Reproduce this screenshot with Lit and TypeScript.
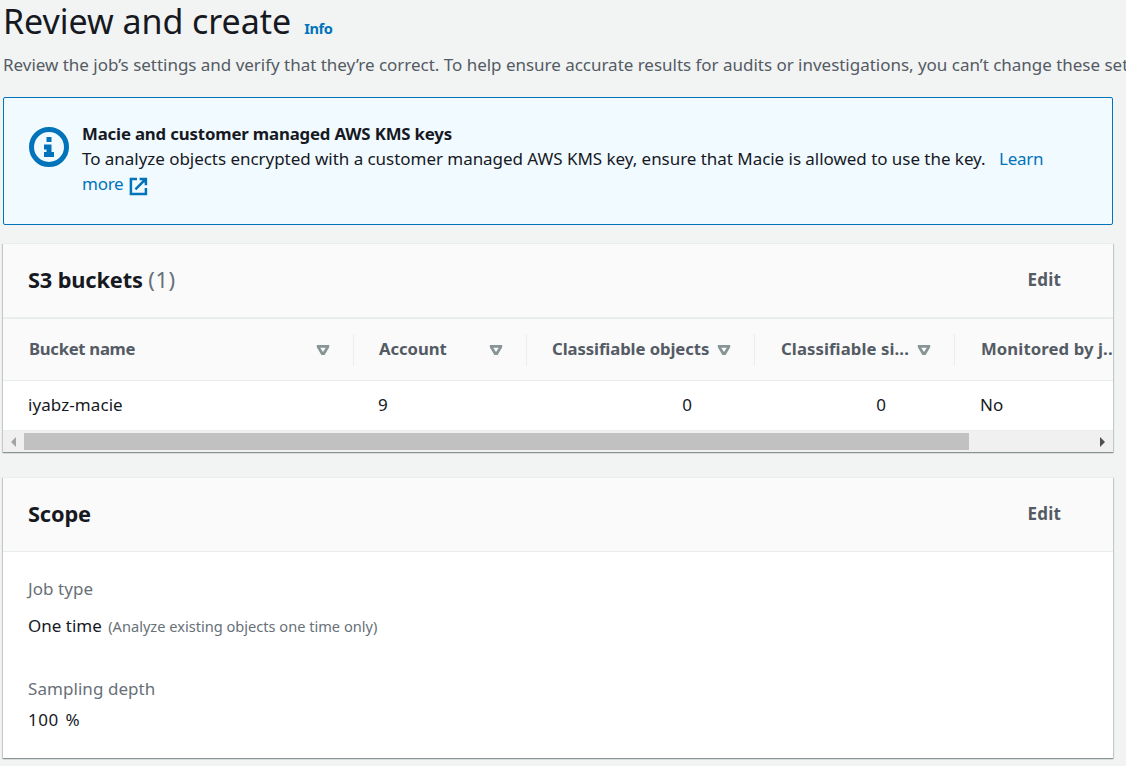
import { LitElement, html, css } from "lit";
import { customElement, property } from "lit/decorators.js";

const caret = html`<svg width="14" height="12" viewBox="0 0 14 12" aria-hidden="true">
  <path
    d="M0.8 1H13.2V3.2L8.6 11H5.4L0.8 3.2ZM4.2 3.7L7 8.1L9.8 3.7Z"
    fill="#879596"
    fill-rule="evenodd"
  />
</svg>`;

@customElement("console-card")
export class ConsoleCard extends LitElement {
  @property() heading = "";
  @property() counter = "";

  static styles = css`
    :host {
      display: block;
      background: #fff;
      box-shadow: 0 1px 0 0 #879596, 0 1px 1px 0 rgba(0, 28, 36, 0.3), 1px 1px 1px 0 rgba(0, 28, 36, 0.15),
        -1px 1px 1px 0 rgba(0, 28, 36, 0.15);
      border-top: 1px solid #eaeded;
      box-sizing: border-box;
    }
    .header {
      display: flex;
      justify-content: space-between;
      align-items: center;
      height: 74px;
      box-sizing: border-box;
      padding: 0 52px 2px 25px;
      background: #fafafa;
      border-bottom: 1px solid #eaeded;
    }
    .heading {
      margin: 0;
      font-size: 21.8px;
      line-height: 30px;
      font-weight: 700;
      color: #16191f;
      letter-spacing: -0.15px;
    }
    .counter {
      font-size: 22px;
      font-weight: 400;
      color: #687078;
      letter-spacing: 0.5px;
    }
    .edit {
      border: 0;
      padding: 0;
      background: none;
      font: inherit;
      font-weight: 700;
      line-height: 25px;
      letter-spacing: 0.2px;
      color: #545b64;
    }
  `;

  render() {
    return html`
      <div class="header">
        <h2 class="heading">
          ${this.heading}${this.counter ? html` <span class="counter">${this.counter}</span>` : ""}
        </h2>
        <button class="edit">Edit</button>
      </div>
      <slot></slot>
    `;
  }
}

@customElement("app-root")
export class AppRoot extends LitElement {
  static styles = css`
    :host {
      display: block;
      width: 1126px;
      height: 766px;
      overflow: hidden;
      box-sizing: border-box;
      padding-left: 3px;
      background: #f2f3f3;
      font-family: "Noto Sans", "Open Sans", sans-serif;
      font-size: 17px;
      line-height: 25px;
      color: #16191f;
    }
    .title-row {
      display: flex;
      align-items: baseline;
      gap: 13px;
      height: 52px;
    }
    .title {
      margin: 0;
      font-size: 34px;
      font-weight: 400;
      line-height: 42px;
      letter-spacing: -0.05px;
      white-space: nowrap;
    }
    .info {
      font-size: 14.6px;
      font-weight: 700;
      letter-spacing: -0.4px;
      color: #0073bb;
    }
    .description {
      height: 45px;
      margin: 0;
      white-space: nowrap;
      color: #545b64;
      letter-spacing: -0.022px;
    }
    .alert {
      display: flex;
      gap: 13px;
      width: 1110px;
      height: 128px;
      box-sizing: border-box;
      padding: 23px 60px 0 25px;
      border: 1px solid #0073bb;
      border-radius: 2px;
      background: #f1faff;
    }
    .alert-icon {
      flex: none;
      margin-top: 6px;
    }
    .alert-title {
      font-size: 16.8px;
      font-weight: 700;
      letter-spacing: -0.16px;
    }
    .alert-text {
      letter-spacing: -0.04px;
    }
    .link {
      color: #0073bb;
      letter-spacing: -0.25px;
    }
    .gap {
      padding-left: 9px;
    }
    .external {
      vertical-align: -6px;
      margin-left: 1px;
    }
    console-card {
      width: 1110px;
    }
    .buckets {
      height: 209px;
      margin-top: 18px;
    }
    .scope {
      height: 281px;
      margin-top: 25px;
    }
    .table {
      overflow: hidden;
    }
    .row {
      display: grid;
      grid-template-columns: 351px 173px 228px 200px 260px;
      width: 1212px;
      align-items: center;
    }
    .head {
      height: 63px;
      box-sizing: border-box;
      background: #fafafa;
      border-top: 1px solid #eaeded;
      border-bottom: 1px solid #eaeded;
      font-size: 16.7px;
      font-weight: 700;
      letter-spacing: -0.08px;
      color: #545b64;
    }
    .th {
      display: flex;
      align-items: center;
      justify-content: space-between;
      height: 32px;
      box-sizing: border-box;
      padding: 0 23px 0 25px;
      border-right: 1px solid #eaeded;
      white-space: nowrap;
    }
    .th svg {
      margin-top: 1px;
    }
    .th span {
      padding-bottom: 2px;
    }
    .th:first-child {
      letter-spacing: -0.3px;
      padding-left: 26px;
    }
    .th:nth-child(n + 4) {
      padding-left: 26px;
      letter-spacing: 0.1px;
    }
    .body {
      height: 49px;
      padding-bottom: 3px;
      box-sizing: border-box;
    }
    .td {
      padding-left: 25px;
      letter-spacing: 0.08px;
    }
    .account {
      padding-left: 24px;
    }
    .objects {
      padding-right: 63px;
      text-align: right;
    }
    .size {
      padding-right: 69px;
      text-align: right;
    }
    .scrollbar {
      display: flex;
      align-items: center;
      height: 22px;
      box-sizing: border-box;
      padding: 0 8px;
      background: #f0f0f0;
      border-top: 1px solid #eaeded;
    }
    .thumb {
      width: 945px;
      height: 17px;
      margin: 0 auto 0 8px;
      background: #c1c1c1;
    }
    .details {
      padding: 24px 25px;
    }
    .label {
      color: #687078;
      letter-spacing: 0.06px;
    }
    .value {
      margin-top: 12px;
    }
    .value.tight {
      margin-top: 6px;
      letter-spacing: 0.5px;
      word-spacing: 2px;
    }
    .field + .field {
      margin-top: 37px;
    }
    .note {
      font-size: 14.6px;
      color: #687078;
      margin-left: 2px;
    }
  `;

  private headers = ["Bucket name", "Account", "Classifiable objects", "Classifiable si..."];

  render() {
    return html`
      <div class="title-row">
        <h1 class="title">Review and create</h1>
        <a class="info">Info</a>
      </div>
      <p class="description">
        Review the job’s settings and verify that they’re correct. To help ensure accurate results for audits or
        investigations, you can’t change these settings
      </p>
      <div class="alert">
        <svg class="alert-icon" width="40" height="40" viewBox="0 0 40 40">
          <circle cx="20" cy="20" r="17.5" fill="none" stroke="#0073bb" stroke-width="5" />
          <path d="M17.5 10h5v5h-5zM15 17.5h7.5v7.5H25v5H15v-5h2.5v-2.5H15z" fill="#0073bb" />
        </svg>
        <div>
          <div class="alert-title">Macie and customer managed AWS KMS keys</div>
          <div>
            <span class="alert-text"
              >To analyze objects encrypted with a customer managed AWS KMS key, ensure that Macie is allowed to use
              the key.</span
            ><span class="gap"></span>
            <a class="link"
              >Learn more
              <svg class="external" width="19" height="19" viewBox="0 0 19 19">
                <path
                  d="M8 1.9H1.9V16.9H16.9V11M10.6 1.9H16.9V8.2M16.6 2.2L6.4 12.4"
                  fill="none"
                  stroke="#0073bb"
                  stroke-width="2.5"
                />
                <path d="M11.6 1.5H17.3V7.2Z" fill="#0073bb" /></svg
            ></a>
          </div>
        </div>
      </div>

      <console-card class="buckets" heading="S3 buckets" counter="(1)">
        <div class="table">
          <div class="row head">
            ${this.headers.map((h) => html`<div class="th"><span>${h}</span>${caret}</div>`)}
            <div class="th"><span>Monitored by j...</span></div>
          </div>
          <div class="row body">
            <div class="td">iyabz-macie</div>
            <div class="td account">9</div>
            <div class="td objects">0</div>
            <div class="td size">0</div>
            <div class="td">No</div>
          </div>
        </div>
        <div class="scrollbar">
          <svg width="5" height="10" viewBox="0 0 5 10"><path d="M5 0V10L0 5Z" fill="#a3a3a3" /></svg>
          <div class="thumb"></div>
          <svg width="5" height="10" viewBox="0 0 5 10"><path d="M0 0V10L5 5Z" fill="#505050" /></svg>
        </div>
      </console-card>

      <console-card class="scope" heading="Scope">
        <div class="details">
          <div class="field">
            <div class="label">Job type</div>
            <div class="value">One time <span class="note">(Analyze existing objects one time only)</span></div>
          </div>
          <div class="field">
            <div class="label">Sampling depth</div>
            <div class="value tight">100 %</div>
          </div>
        </div>
      </console-card>
    `;
  }
}
